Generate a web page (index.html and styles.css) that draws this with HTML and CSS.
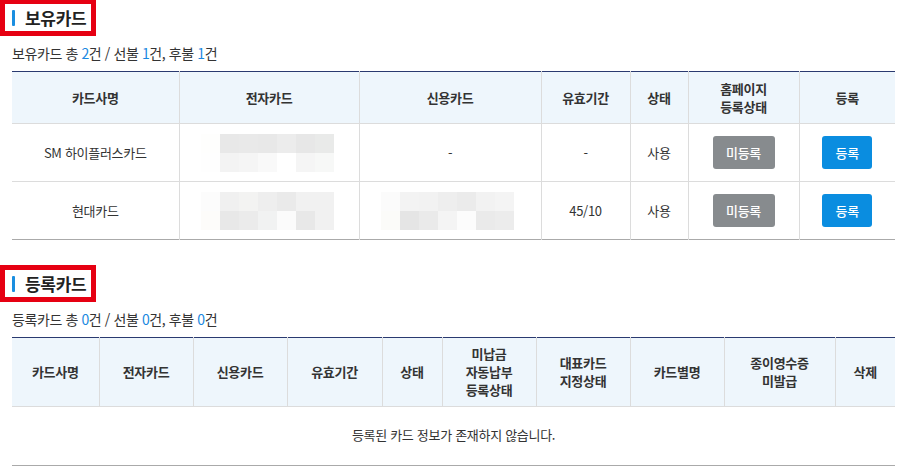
FILE: index.html
```html
<!DOCTYPE html>
<html lang="ko">
<head>
<meta charset="utf-8">
<title>보유카드</title>
<link rel="stylesheet" href="styles.css">
</head>
<body>
<div class="page">
  <section class="section first">
    <h2 class="title"><span class="bar"></span>보유카드</h2>
    <p class="summary">보유카드 총 <em>2</em>건 / 선불 <em>1</em>건, 후불 <em>1</em>건</p>
    <table class="grid">
      <colgroup>
        <col style="width:167px"><col style="width:180px"><col style="width:182px"><col style="width:89px"><col style="width:58px"><col style="width:111px"><col style="width:96px">
      </colgroup>
      <thead>
        <tr><th>카드사명</th><th>전자카드</th><th>신용카드</th><th>유효기간</th><th>상태</th><th>홈페이지<br>등록상태</th><th>등록</th></tr>
      </thead>
      <tbody>
        <tr>
          <td>SM 하이플러스카드</td>
          <td><div class="blur">
            <i style="background:#fefefd"></i><i style="background:#e8e8e8"></i><i style="background:#e9e9e9"></i><i style="background:#e8e8e8"></i><i style="background:#ececec"></i><i style="background:#e7e7e7"></i><i style="background:#e9eae9"></i>
            <i style="background:#fefefe"></i><i style="background:#f3f3f3"></i><i style="background:#f5f5f5"></i><i style="background:#f9f9f9"></i><i style="background:#ffffff"></i><i style="background:#f5f5f5"></i><i style="background:#f7f8f7"></i>
          </div></td>
          <td>-</td>
          <td>-</td>
          <td>사용</td>
          <td><span class="btn gray">미등록</span></td>
          <td><span class="btn blue">등록</span></td>
        </tr>
        <tr>
          <td>현대카드</td>
          <td><div class="blur">
            <i style="background:#fcfcfc"></i><i style="background:#f0f0f0"></i><i style="background:#f3f3f2"></i><i style="background:#eeeeee"></i><i style="background:#eaeaea"></i><i style="background:#f1f1f1"></i><i style="background:#f1f1f1"></i>
            <i style="background:#fdfcfa"></i><i style="background:#e8e8e8"></i><i style="background:#ebebeb"></i><i style="background:#f1f2f2"></i><i style="background:#fbfbfb"></i><i style="background:#e8e8e8"></i><i style="background:#f1f1f1"></i>
          </div></td>
          <td><div class="blur">
            <i style="background:#fbfbfb"></i><i style="background:#f3f3f3"></i><i style="background:#f2f2f2"></i><i style="background:#eeeeee"></i><i style="background:#ebebeb"></i><i style="background:#f2f2f2"></i><i style="background:#f4f4f4"></i>
            <i style="background:#fbfbf9"></i><i style="background:#e5e5e5"></i><i style="background:#eaeaea"></i><i style="background:#f4f4f4"></i><i style="background:#fcfcfc"></i><i style="background:#eaeaea"></i><i style="background:#ececec"></i>
          </div></td>
          <td>45/10</td>
          <td>사용</td>
          <td><span class="btn gray">미등록</span></td>
          <td><span class="btn blue">등록</span></td>
        </tr>
      </tbody>
    </table>
  </section>

  <section class="section">
    <h2 class="title"><span class="bar"></span>등록카드</h2>
    <p class="summary">등록카드 총 <em>0</em>건 / 선불 <em>0</em>건, 후불 <em>0</em>건</p>
    <table class="grid">
      <colgroup>
        <col style="width:87px"><col style="width:94px"><col style="width:94px"><col style="width:95px"><col style="width:60px"><col style="width:94px"><col style="width:94px"><col style="width:94px"><col style="width:111px"><col style="width:60px">
      </colgroup>
      <thead>
        <tr><th>카드사명</th><th>전자카드</th><th>신용카드</th><th>유효기간</th><th>상태</th><th>미납금<br>자동납부<br>등록상태</th><th>대표카드<br>지정상태</th><th>카드별명</th><th>종이영수증<br>미발급</th><th>삭제</th></tr>
      </thead>
      <tbody>
        <tr><td colspan="10" class="empty">등록된 카드 정보가 존재하지 않습니다.</td></tr>
      </tbody>
    </table>
  </section>
</div>
</body>
</html>
```

FILE: styles.css
```css
* { box-sizing: border-box; }
html, body { margin: 0; padding: 0; background: #fff; }
body {
  font-family: "Noto Sans CJK KR", "Noto Sans", sans-serif;
  color: #333;
  font-size: 13px;
}
.page { width: 895px; }
.section { display: flex; flex-direction: column; align-items: flex-start; }
.section.first { margin-top: -1px; }
.section + .section { margin-top: 25px; }

.title {
  margin: 0;
  display: flex;
  align-items: center;
  width: 96px;
  height: 37px;
  border: 5px solid #e60012;
  padding-left: 7px;
  font-size: 17px;
  font-weight: 700;
  color: #222;
  letter-spacing: -0.3px;
}
.title .bar {
  display: block;
  width: 3px;
  height: 16px;
  background: #1a8ee0;
  margin-right: 10px;
  border-radius: 1px;
}
.summary {
  margin: 7px 0 0 12px;
  font-size: 14px;
  line-height: 20px;
  color: #333;
  letter-spacing: -0.4px;
}
.summary em { font-style: normal; color: #1a88e0; }

.grid {
  margin: 8px 0 0 12px;
  width: 883px;
  table-layout: fixed;
  border-collapse: collapse;
  border-top: 1px solid #2a3a70;
  border-bottom: 1px solid #aaa;
}
.grid th {
  background: #eef6fc;
  font-weight: 700;
  color: #333;
  font-size: 13px;
  line-height: 18px;
  padding: 7px 4px;
  height: 52px;
  border-left: 1px solid #dcdcdc;
  letter-spacing: -0.3px;
}
.grid td {
  text-align: center;
  height: 58px;
  padding: 0 4px;
  border-left: 1px solid #dcdcdc;
  border-top: 1px solid #dcdcdc;
  color: #333;
  letter-spacing: -0.3px;
}
.grid th:first-child, .grid td:first-child { border-left: none; }
.grid td.empty { height: 59px; padding-bottom: 3px; }

.blur {
  display: grid;
  grid-template-columns: repeat(7, 19px);
  grid-template-rows: 19px 19px;
  width: 133px;
  margin: 0 auto 0 17px;
}
.blur i { display: block; }

.btn {
  display: inline-flex;
  align-items: center;
  justify-content: center;
  height: 33px;
  border-radius: 3px;
  color: #fff;
  font-size: 13px;
  font-weight: 500;
}
.btn.gray { width: 62px; background: #878b8e; }
.btn.blue { width: 50px; background: #0a8de0; }
```
